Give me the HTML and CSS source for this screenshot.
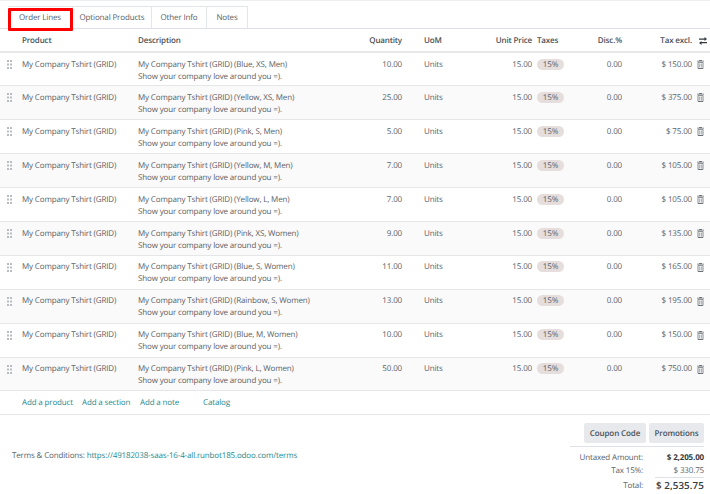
FILE: index.html
```html
<!DOCTYPE html>
<html lang="en">
<head>
<meta charset="utf-8">
<title>Order Lines</title>
<link rel="stylesheet" href="styles.css">
</head>
<body>
<svg class="defs" width="0" height="0" aria-hidden="true">
  <symbol id="grip" viewBox="0 0 5 9"><path fill="#b9bdc1" d="M0 0h2v2H0zM3 0h2v2H3zM0 3.500h2v2H0zM3 3.500h2v2H3zM0 7h2v2H0zM3 7h2v2H3z"/></symbol>
  <symbol id="trash" viewBox="0 0 7 9"><path fill="#6a7076" d="M2.300 0h2.400l.4.8H7v.8H0V.8h1.900zM.6 2.200h5.800V8a1 1 0 0 1-1 1H1.600a1 1 0 0 1-1-1zm.8.8V8h4.200V3zM2.500 3.600h.6v4h-.6zm1.400 0h.6v4h-.6z"/></symbol>
</svg>
<main class="page">
  <nav class="tabs">
    <a class="tab tab-active">Order Lines<span class="mark"></span></a>
    <a class="tab">Optional Products</a>
    <a class="tab">Other Info</a>
    <a class="tab">Notes</a>
  </nav>
  <table class="lines">
    <colgroup>
      <col class="c-handle"><col class="c-product"><col class="c-desc"><col class="c-qty"><col class="c-uom"><col class="c-price"><col class="c-tax"><col class="c-disc"><col class="c-total"><col class="c-act">
    </colgroup>
    <thead>
      <tr>
        <th></th><th>Product</th><th>Description</th><th class="num">Quantity</th><th class="uom">UoM</th><th class="num">Unit Price</th><th class="tax">Taxes</th><th class="num">Disc.%</th><th class="num">Tax excl.</th>
        <th class="act"><svg class="swap" viewBox="0 0 8 8" width="8" height="8"><path fill="#343a40" d="M0 1.500h5.500V0L8 2 5.500 4V2.700H0zM8 5H2.500V4L0 6l2.500 2V6.300H8z"/></svg></th>
      </tr>
    </thead>
    <tbody>
      <tr><td class="grip"><svg width="5" height="9"><use href="#grip"/></svg></td><td>My Company Tshirt (GRID)</td><td>My Company Tshirt (GRID) (Blue, XS, Men)<br>Show your company love around you =).</td><td class="num">10.00</td><td class="uom">Units</td><td class="num">15.00</td><td class="tax"><span class="pill">15%</span></td><td class="num">0.00</td><td class="num">$ 150.00</td><td class="act"><svg width="7" height="9"><use href="#trash"/></svg></td></tr>
      <tr><td class="grip"><svg width="5" height="9"><use href="#grip"/></svg></td><td>My Company Tshirt (GRID)</td><td>My Company Tshirt (GRID) (Yellow, XS, Men)<br>Show your company love around you =).</td><td class="num">25.00</td><td class="uom">Units</td><td class="num">15.00</td><td class="tax"><span class="pill">15%</span></td><td class="num">0.00</td><td class="num">$ 375.00</td><td class="act"><svg width="7" height="9"><use href="#trash"/></svg></td></tr>
      <tr><td class="grip"><svg width="5" height="9"><use href="#grip"/></svg></td><td>My Company Tshirt (GRID)</td><td>My Company Tshirt (GRID) (Pink, S, Men)<br>Show your company love around you =).</td><td class="num">5.00</td><td class="uom">Units</td><td class="num">15.00</td><td class="tax"><span class="pill">15%</span></td><td class="num">0.00</td><td class="num">$ 75.00</td><td class="act"><svg width="7" height="9"><use href="#trash"/></svg></td></tr>
      <tr><td class="grip"><svg width="5" height="9"><use href="#grip"/></svg></td><td>My Company Tshirt (GRID)</td><td>My Company Tshirt (GRID) (Yellow, M, Men)<br>Show your company love around you =).</td><td class="num">7.00</td><td class="uom">Units</td><td class="num">15.00</td><td class="tax"><span class="pill">15%</span></td><td class="num">0.00</td><td class="num">$ 105.00</td><td class="act"><svg width="7" height="9"><use href="#trash"/></svg></td></tr>
      <tr><td class="grip"><svg width="5" height="9"><use href="#grip"/></svg></td><td>My Company Tshirt (GRID)</td><td>My Company Tshirt (GRID) (Yellow, L, Men)<br>Show your company love around you =).</td><td class="num">7.00</td><td class="uom">Units</td><td class="num">15.00</td><td class="tax"><span class="pill">15%</span></td><td class="num">0.00</td><td class="num">$ 105.00</td><td class="act"><svg width="7" height="9"><use href="#trash"/></svg></td></tr>
      <tr><td class="grip"><svg width="5" height="9"><use href="#grip"/></svg></td><td>My Company Tshirt (GRID)</td><td>My Company Tshirt (GRID) (Pink, XS, Women)<br>Show your company love around you =).</td><td class="num">9.00</td><td class="uom">Units</td><td class="num">15.00</td><td class="tax"><span class="pill">15%</span></td><td class="num">0.00</td><td class="num">$ 135.00</td><td class="act"><svg width="7" height="9"><use href="#trash"/></svg></td></tr>
      <tr><td class="grip"><svg width="5" height="9"><use href="#grip"/></svg></td><td>My Company Tshirt (GRID)</td><td>My Company Tshirt (GRID) (Blue, S, Women)<br>Show your company love around you =).</td><td class="num">11.00</td><td class="uom">Units</td><td class="num">15.00</td><td class="tax"><span class="pill">15%</span></td><td class="num">0.00</td><td class="num">$ 165.00</td><td class="act"><svg width="7" height="9"><use href="#trash"/></svg></td></tr>
      <tr><td class="grip"><svg width="5" height="9"><use href="#grip"/></svg></td><td>My Company Tshirt (GRID)</td><td>My Company Tshirt (GRID) (Rainbow, S, Women)<br>Show your company love around you =).</td><td class="num">13.00</td><td class="uom">Units</td><td class="num">15.00</td><td class="tax"><span class="pill">15%</span></td><td class="num">0.00</td><td class="num">$ 195.00</td><td class="act"><svg width="7" height="9"><use href="#trash"/></svg></td></tr>
      <tr><td class="grip"><svg width="5" height="9"><use href="#grip"/></svg></td><td>My Company Tshirt (GRID)</td><td>My Company Tshirt (GRID) (Blue, M, Women)<br>Show your company love around you =).</td><td class="num">10.00</td><td class="uom">Units</td><td class="num">15.00</td><td class="tax"><span class="pill">15%</span></td><td class="num">0.00</td><td class="num">$ 150.00</td><td class="act"><svg width="7" height="9"><use href="#trash"/></svg></td></tr>
      <tr><td class="grip"><svg width="5" height="9"><use href="#grip"/></svg></td><td>My Company Tshirt (GRID)</td><td>My Company Tshirt (GRID) (Pink, L, Women)<br>Show your company love around you =).</td><td class="num">50.00</td><td class="uom">Units</td><td class="num">15.00</td><td class="tax"><span class="pill">15%</span></td><td class="num">0.00</td><td class="num">$ 750.00</td><td class="act"><svg width="7" height="9"><use href="#trash"/></svg></td></tr>
    </tbody>
  </table>
  <div class="adders">
    <a class="link add-product">Add a product</a>
    <a class="link add-section">Add a section</a>
    <a class="link add-note">Add a note</a>
    <a class="link">Catalog</a>
  </div>
  <footer class="foot">
    <p class="terms">Terms &amp; Conditions: <a class="link">https://49182038-saas-16-4-all.runbot185.odoo.com/terms</a></p>
    <div class="side">
      <div class="buttons"><button class="btn">Coupon Code</button><button class="btn">Promotions</button></div>
      <dl class="totals">
        <dt>Untaxed Amount:</dt><dd class="strong">$ 2,205.00</dd>
        <dt>Tax 15%:</dt><dd>$ 330.75</dd>
        <dt class="grand-label">Total:</dt><dd class="grand">$ 2,535.75</dd>
      </dl>
    </div>
  </footer>
</main>
</body>
</html>
```

FILE: styles.css
```css
* { box-sizing: border-box; }
html, body { margin: 0; padding: 0; background: #fff; }
body { width: 710px; height: 494px; overflow: hidden; font-family: "Open Sans", "Noto Sans", sans-serif; font-size: 8px; letter-spacing: -.15px; line-height: 12px; color: #5a6167; text-rendering: geometricPrecision; }
.defs { position: absolute; }
.page { border-top: 1px solid #eceef0; }

.tabs { display: flex; height: 28px; padding: 5px 0 0 8px; border-bottom: 1px solid #dee2e6; }
.tab { position: relative; display: flex; align-items: center; justify-content: center; height: 23px; border: 1px solid #e3e6e9; border-bottom: 0; border-left: 0; }
.tab:nth-child(1) { width: 65px; }
.tab:nth-child(2) { width: 79px; }
.tab:nth-child(3) { width: 55px; }
.tab:nth-child(4) { width: 41px; }
.mark { position: absolute; left: 0; top: 1px; width: 65px; height: 23px; border: 3px solid #f00; border-radius: 1px; }

.lines { width: 710px; border-collapse: collapse; table-layout: fixed; }
.c-handle { width: 22px; } .c-product { width: 116px; } .c-desc { width: 206px; } .c-qty { width: 58px; } .c-uom { width: 78px; }
.c-price { width: 52px; } .c-tax { width: 58px; } .c-disc { width: 32px; } .c-total { width: 70px; } .c-act { width: 18px; }
.lines th { height: 23px; padding: 1px 0 0; text-align: left; font-weight: 600; color: #495057; border-bottom: 2px solid #e6e8ea; white-space: nowrap; }
.lines td { height: 33.9px; padding: 5.600px 0 0; vertical-align: top; white-space: nowrap; border-bottom: 1px solid #e4e6e8; }
.lines tbody tr:nth-child(even) { background: #fafafa; }
.lines .num { text-align: right; }
.lines .uom { padding-left: 22px; }
.lines .tax { padding-left: 5px; }
.lines .act { text-align: left; padding-left: 0; }
.lines td.act svg { display: block; margin: 1.500px 0 0 5px; }
.lines .grip { padding: 7px 0 0 7px; }
.grip svg { display: block; }
.swap { display: block; margin-left: 7px; }
.pill { display: inline-block; width: 27px; height: 11px; border-radius: 6px; background: #e6dedc; text-align: center; line-height: 11px; }

.adders { display: flex; height: 24px; padding: 6px 0 0 22px; border-bottom: 1px solid #e4e6e8; }
.link { color: #1f8a8f; text-decoration: none; }
.add-product { width: 60px; } .add-section { width: 58px; } .add-note { width: 63px; }

.foot { display: flex; justify-content: space-between; padding: 8px 6px 0 12px; }
.terms { margin: 27px 0 0; }
.side { width: 134px; }
.buttons { display: flex; justify-content: flex-end; gap: 3px; height: 24px; padding-bottom: 4px; border-bottom: 1px solid #dee2e6; }
.btn { height: 20px; padding: 0; border: 0; border-radius: 2px; background: #e7e9ed; color: #495057; white-space: nowrap; font: 600 8px/21px "Open Sans", sans-serif; letter-spacing: -.1px; text-rendering: geometricPrecision; }
.btn:first-child { width: 62px; } .btn:last-child { width: 55px; }
.totals { display: grid; grid-template-columns: 73px 61px; margin: 4px 0 0; text-align: right; }
.totals dt { line-height: 13px; }
.totals dd { margin: 0; line-height: 13px; white-space: nowrap; }
.strong { font-weight: 700; color: #343a40; }
.grand-label { padding-top: 2px; }
.grand { margin-left: 12px !important; padding-top: 1px; border-top: 1px solid #dee2e6; font-size: 9.800px; font-weight: 600; color: #343a40; letter-spacing: .1px; }
```
